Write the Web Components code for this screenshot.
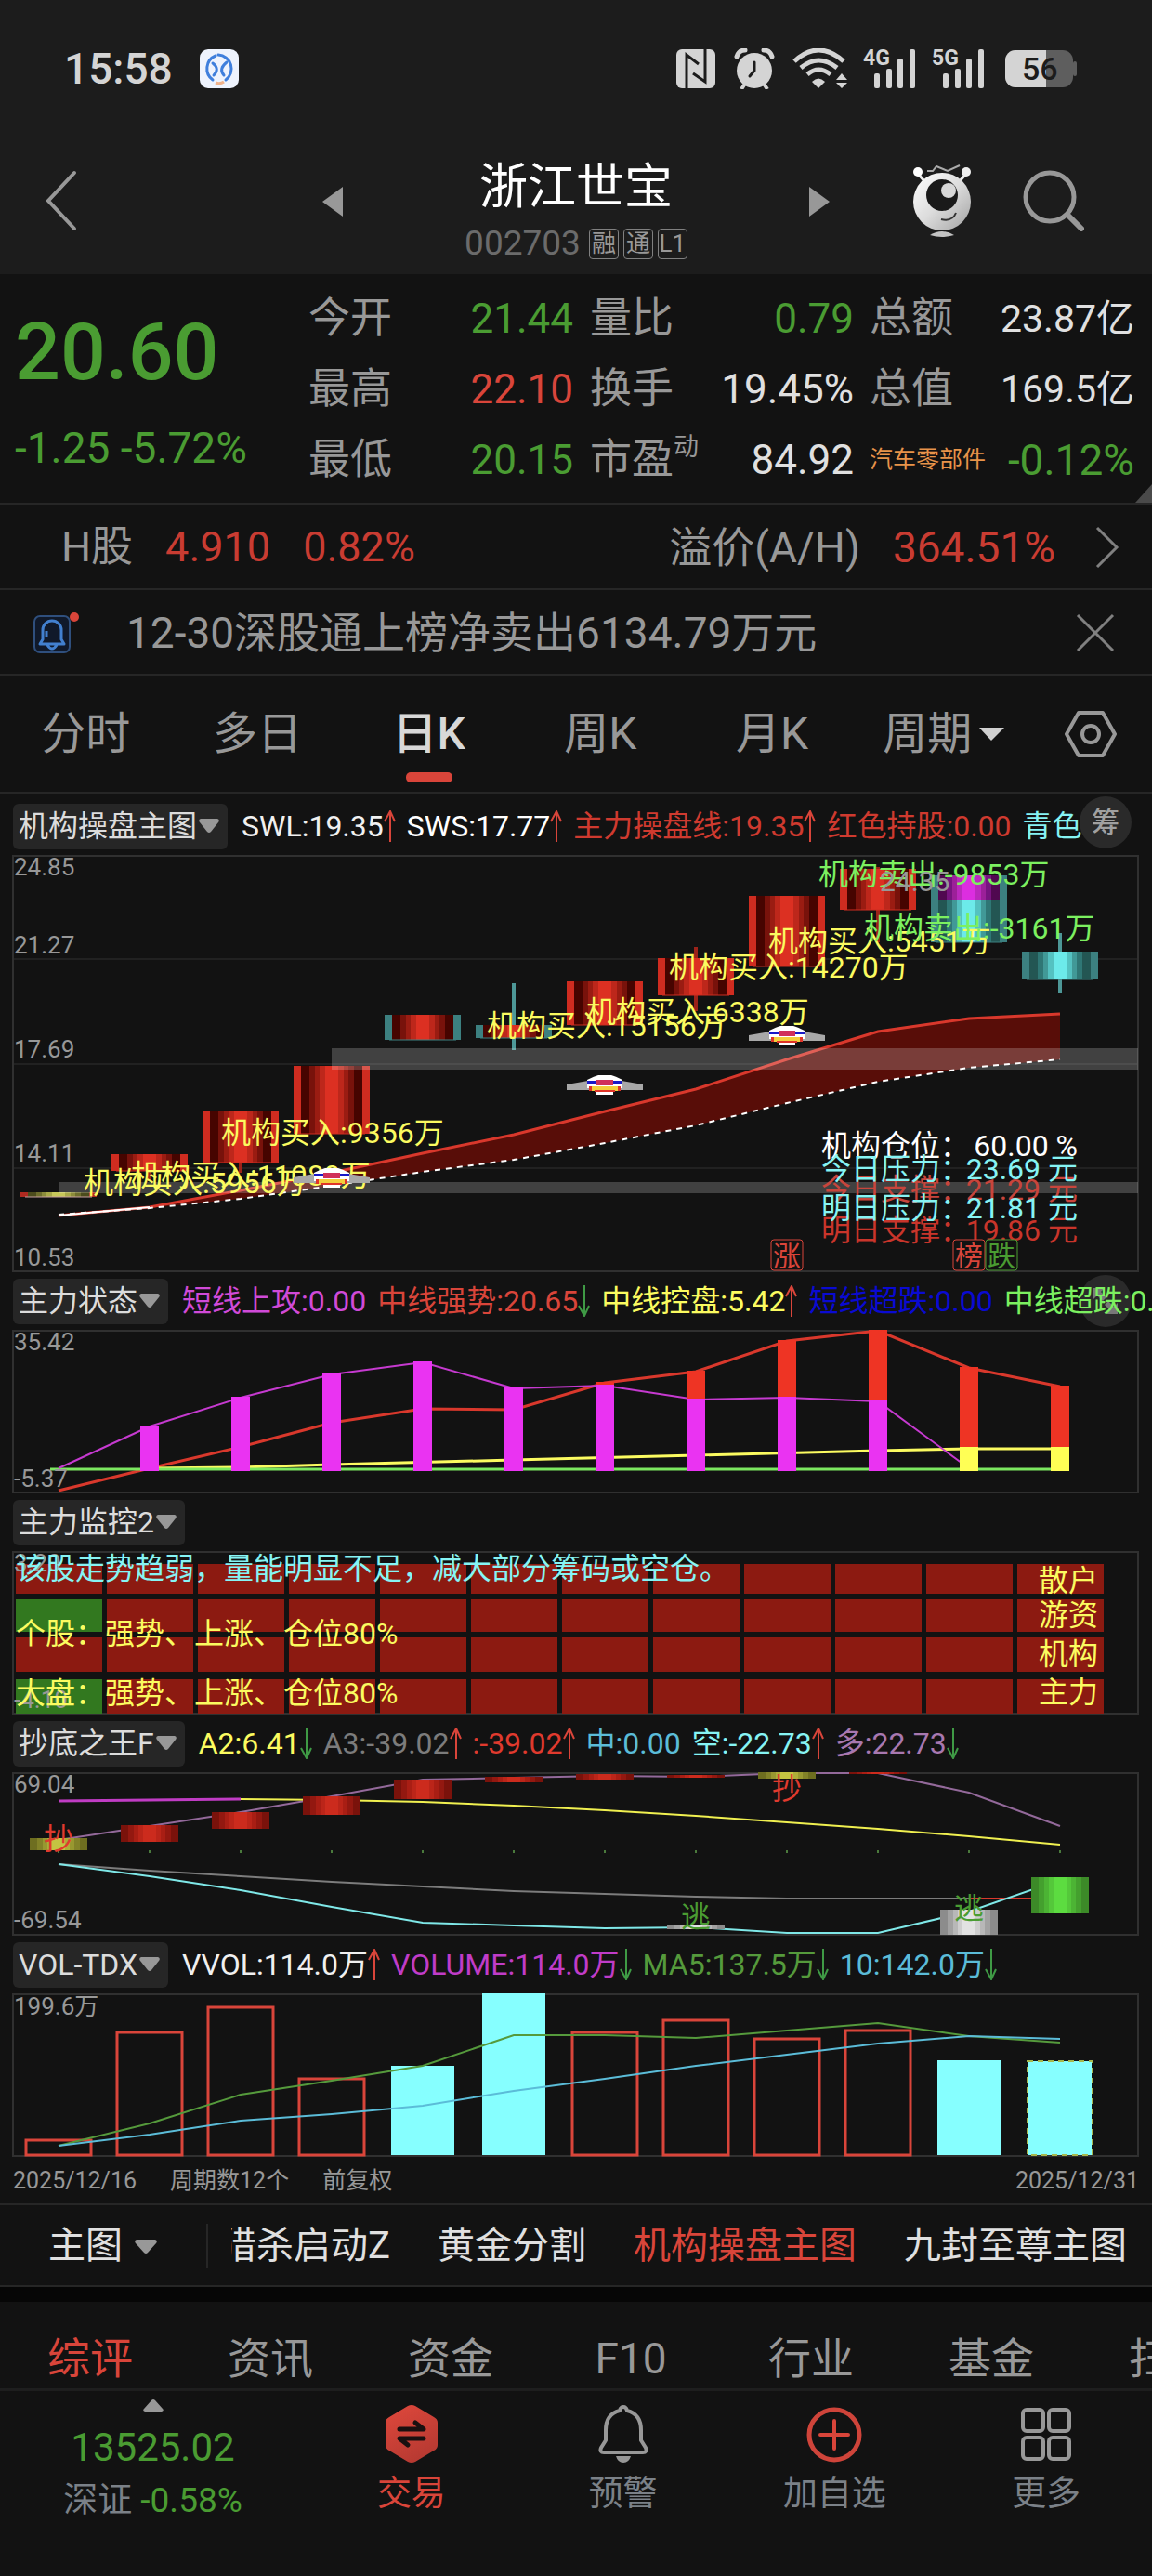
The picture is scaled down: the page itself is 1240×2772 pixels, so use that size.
<!DOCTYPE html>
<html lang="zh-CN">
<head>
<meta charset="utf-8">
<meta name="viewport" content="width=device-width, initial-scale=1">
<title>浙江世宝 002703</title>
<style>
  html { background: #121212; }
  body {
    margin: 0;
    background: #121212;
    color: #e0e0e0;
    font-family: Roboto, "Noto Sans CJK SC", sans-serif;
    --up: #d9453a;
    --down: #4a9c32;
    --muted: #989898;
    --line: #262626;
    --cyan: #86f4f4;
  }
</style>
</head>
<body>
<stock-page></stock-page>

<script>
const base = `
  * { box-sizing: border-box; }
  :host { display: block; }
  button, a { font: inherit; color: inherit; background: none; border: 0; padding: 0; margin: 0; text-decoration: none; white-space: nowrap; }
  svg { display: block; flex: none; }
`;

function define(name, css, html) {
  const template = document.createElement('template');
  template.innerHTML = `<style>${base}${css}</style>${html}`;
  customElements.define(name, class extends HTMLElement {
    constructor() {
      super();
      this.attachShadow({ mode: 'open' });
      this.shadowRoot.appendChild(template.content.cloneNode(true));
    }
  });
}

/* ---------- status bar ---------- */
const signal = (label) => `
  <svg width="58" height="44" viewBox="0 0 58 44" overflow="visible">
    <text x="0" y="18" font-size="23" font-weight="700" fill="#d4d4d4">${label}</text>
    <g fill="#d4d4d4"><rect x="12" y="27" width="6" height="16" rx="2"/><rect x="25" y="22" width="6" height="21" rx="2"/><rect x="37" y="11" width="6" height="32" rx="2"/><rect x="50" y="1" width="6" height="42" rx="2"/></g>
  </svg>`;

define('status-bar', `
  :host { display: flex; align-items: center; height: 148px; padding: 0 80px 0 69px; color: #d4d4d4; }
  .time { font-size: 46px; font-weight: 500; line-height: 50px; margin-right: 29px; }
  .icons { display: flex; align-items: center; gap: 16px; margin-left: auto; }
  .wide { margin-left: 5px; }
`, `
  <span class="time">15:58</span>
  <svg width="42" height="42" viewBox="0 0 42 42">
    <rect width="42" height="42" rx="9" fill="#eef3fd"/>
    <g fill="none" stroke="#3f7fdc" stroke-width="3" stroke-linecap="round">
      <path d="M14 33A15 15 0 0 1 17 7"/><path d="M20 6A15 15 0 0 1 28 33"/>
      <path d="M14 15q8 6 1 13M29 14q-9 7-3 14"/>
    </g>
    <path d="M17 36q5 2 9-1" stroke="#f0b28a" stroke-width="3" fill="none"/>
  </svg>
  <div class="icons">
    <svg width="44" height="44" viewBox="0 0 44 44">
      <rect x="1" y="1" width="42" height="42" rx="6" fill="#d4d4d4"/>
      <path d="M12 43V7l13 10M32 1v35L19 27" fill="none" stroke="#1c1c1c" stroke-width="3"/>
    </svg>
    <svg width="50" height="44" viewBox="-3 0 50 44">
      <circle cx="22" cy="24" r="19" fill="#d4d4d4"/>
      <path d="M3 9Q5 2 12 2M41 9Q39 2 32 2" stroke="#d4d4d4" stroke-width="5" fill="none" stroke-linecap="round"/>
      <path d="M12 38l-4 6M32 38l4 6" stroke="#d4d4d4" stroke-width="4"/>
      <path d="M22 15v9l-5 6" stroke="#1c1c1c" stroke-width="3" fill="none" stroke-linecap="round"/>
    </svg>
    <svg width="60" height="44" viewBox="0 0 60 44">
      <g fill="none" stroke="#d4d4d4" stroke-width="5"><path d="M2 14Q28-10 55 14"/><path d="M9 21Q28 5 48 21"/><path d="M16 28Q28 18 41 28"/></g>
      <path d="M21 36q7-7 14 0l-7 7z" fill="#d4d4d4"/>
      <path d="M47 34l6-7 6 7zM47 37h12l-6 6z" fill="#d4d4d4"/>
    </svg>
    ${signal('4G')}
    ${signal('5G')}
    <svg class="wide" width="78" height="40" viewBox="0 0 78 40">
      <rect width="73" height="40" rx="11" fill="#5e5e5e"/><rect x="73" y="12" width="4" height="16" rx="2" fill="#5e5e5e"/>
      <path d="M11 0h33v40H11A11 11 0 0 1 0 29V11A11 11 0 0 1 11 0z" fill="#d4d4d4"/>
      <text x="18" y="32" font-size="34" font-weight="500" fill="#1c1c1c">56</text>
    </svg>
  </div>
`);

/* ---------- title bar ---------- */
define('stock-header', `
  :host { display: grid; grid-template-columns: 330px 1fr 330px; align-items: center; height: 147px; padding-bottom: 5px; }
  .left, .right { display: flex; align-items: center; padding-bottom: 6px; }
  .left { padding-left: 48px; }
  .mid { display: flex; flex-direction: column; align-items: center; padding-top: 14px; }
  .right { padding-right: 72px; }
  .robot { margin-left: 73px; margin-right: 56px; }
  h1 { margin: 0; font-size: 52px; line-height: 64px; font-weight: 400; color: #fff; }
  .code { display: flex; align-items: center; gap: 5px; font-size: 37px; line-height: 40px; color: #6b6b6b; padding-top: 8px; }
  .code b { font-weight: 400; font-size: 26px; line-height: 31px; min-width: 32px; text-align: center; color: #989898; border: 1px solid #808080; border-radius: 4px; }
  .code span { margin-right: 4px; }
`, `
  <div class="left">
    <button aria-label="返回"><svg width="36" height="66" viewBox="0 0 36 66"><path d="M32 3L4 33l28 30" fill="none" stroke="#989898" stroke-width="4" stroke-linecap="round"/></svg></button>
  </div>
  <div class="mid">
    <h1>浙江世宝</h1>
    <div class="code"><span>002703</span><b>融</b><b>通</b><b>L1</b></div>
  </div>
  <div class="right">
    <button class="robot" aria-label="助手">
      <svg width="62" height="78" viewBox="0 0 62 78">
        <defs><linearGradient id="g" x1="0" y1="0" x2="1" y2="1"><stop offset="0" stop-color="#fff"/><stop offset=".5" stop-color="#dcdcdc"/><stop offset="1" stop-color="#a2a2a2"/></linearGradient></defs>
        <path d="M5 10l8 9M57 10l-8 9" stroke="#eee" stroke-width="3"/>
        <circle cx="5" cy="8" r="5" fill="#fff"/><circle cx="57" cy="8" r="5" fill="#eee"/>
        <path d="M15 7h6l4-5 12 5L50 1" stroke="#aaa" stroke-width="2" fill="none"/>
        <circle cx="31" cy="40" r="31" fill="url(#g)"/>
        <circle cx="31" cy="33" r="17" fill="#1a1a1a"/><circle cx="38" cy="28" r="8" fill="#d8d8d8"/>
        <path d="M30 59q12 3 16-7" stroke="#333" stroke-width="2" fill="none"/>
        <path d="M18 76q13-8 26 0q-13 4-26 0z" fill="#c4c4c4"/>
      </svg>
    </button>
    <button aria-label="搜索"><svg width="66" height="66" viewBox="0 0 66 66"><circle cx="29" cy="29" r="26" fill="none" stroke="#989898" stroke-width="5"/><path d="M48 48l15 15" stroke="#989898" stroke-width="6" stroke-linecap="round"/></svg></button>
  </div>
`);

/* previous / next stock arrows sit beside the name */
define('stock-switch', `
  :host { display: block; }
  svg path { fill: #989898; }
  :host([dir-next]) svg { transform: scaleX(-1); }
`, `<button aria-label="切换股票"><svg width="22" height="32" viewBox="0 0 22 32"><path d="M22 0v32L0 16z"/></svg></button>`);

/* ---------- quote ---------- */
define('quote-board', `
  :host { position: relative; display: grid; grid-template-columns: 316px 285px 18px 284px 17px 285px; border-bottom: 2px solid var(--line); height: 248px; padding: 10px 0 8px 16px; justify-content: start; }
  .price { display: flex; flex-direction: column; color: var(--down); }
  .price strong { font-size: 86px; font-weight: 500; line-height: 96px; padding-top: 26px; }
  .price span { font-size: 46px; line-height: 52px; padding-top: 29px; white-space: nowrap; }
  dl { display: grid; grid-template-rows: repeat(3, 76px); align-items: center; margin: 0; }
  dl.b { grid-column: 4; } dl.c { grid-column: 6; }
  div { display: flex; justify-content: space-between; align-items: center; }
  dt { font-size: 45px; line-height: 56px; color: var(--muted); white-space: nowrap; }
  dd { margin: 0; font-size: 44px; line-height: 56px; white-space: nowrap; color: #e0e0e0; }
  .c dd { font-size: 41px; }
  .c dd.down { font-size: 46px; }
  dd.up { color: var(--up); } dd.down { color: var(--down); }
  dt sup { font-size: 27px; line-height: 28px; vertical-align: 20px; }
  dt.tag { font-size: 25px; color: #e8944a; }
  i { position: absolute; right: 0; bottom: 0; width: 18px; height: 20px; background: #4a4a4a; clip-path: polygon(100% 0, 100% 100%, 0 100%); }
`, `
  <section class="price"><strong>20.60</strong><span>-1.25 -5.72%</span></section>
  <dl>
    <div><dt>今开</dt><dd class="down">21.44</dd></div>
    <div><dt>最高</dt><dd class="up">22.10</dd></div>
    <div><dt>最低</dt><dd class="down">20.15</dd></div>
  </dl>
  <dl class="b">
    <div><dt>量比</dt><dd class="down">0.79</dd></div>
    <div><dt>换手</dt><dd>19.45%</dd></div>
    <div><dt>市盈<sup>动</sup></dt><dd>84.92</dd></div>
  </dl>
  <dl class="c">
    <div><dt>总额</dt><dd>23.87亿</dd></div>
    <div><dt>总值</dt><dd>169.5亿</dd></div>
    <div><dt class="tag">汽车零部件</dt><dd class="down">-0.12%</dd></div>
  </dl>
  <i></i>
`);

define('ah-bar', `
  :host { display: flex; align-items: center; height: 92px; padding: 2px 34px 0 66px; border-bottom: 2px solid var(--line); font-size: 45px; line-height: 56px; color: var(--muted); white-space: nowrap; }
  .n { color: #c93c32; margin-left: 35px; }
  .right { display: flex; align-items: center; margin-left: auto; font-size: 46px; }
  button { margin-left: 42px; }
`, `
  <span>H股</span><span class="n">4.910</span><span class="n">0.82%</span>
  <div class="right"><span>溢价(A/H)</span><span class="n">364.51%</span>
  <button aria-label="更多"><svg width="28" height="46" viewBox="0 0 28 46"><path d="M3 2l21 21L3 44" fill="none" stroke="#808080" stroke-width="3"/></svg></button></div>
`);

define('notice-bar', `
  :host { display: flex; align-items: center; height: 92px; padding: 2px 40px 0 36px; border-bottom: 2px solid var(--line); font-size: 46px; line-height: 56px; color: var(--muted); }
  a { flex: 1; margin-left: 50px; }
`, `
  <svg width="50" height="46" viewBox="0 0 50 46">
    <rect x="1" y="5" width="38" height="39" rx="6" fill="#10192a" stroke="#2f4f7d" stroke-width="2"/>
    <path d="M7 35h26l-3-5V20a10 10 0 0 0-20 0v10zM15 36q5 8 10 0M14 21v6" fill="none" stroke="#4280cf" stroke-width="3" stroke-linejoin="round"/>
    <circle cx="44" cy="6" r="5" fill="#d9453a"/>
  </svg>
  <a href="#">12-30深股通上榜净卖出6134.79万元</a>
  <button aria-label="关闭"><svg width="42" height="42" viewBox="0 0 42 42"><path d="M2 2l38 38M40 2L2 40" stroke="#808080" stroke-width="3"/></svg></button>
`);

define('period-tabs', `
  :host { display: flex; height: 127px; border-bottom: 2px solid var(--line); }
  nav { flex: 1; display: grid; grid-template-columns: repeat(6, 1fr); }
  button { position: relative; font-size: 48px; line-height: 60px; color: var(--muted); }
  .on { color: #d8d8d8; font-weight: 500; }
  .on::after { content: ""; position: absolute; left: 50%; bottom: 10px; width: 50px; height: 11px; margin-left: -25px; border-radius: 5px; background: var(--up); }
  .drop { display: flex; align-items: center; justify-content: center; gap: 8px; }
  .set { width: 132px; display: flex; align-items: center; justify-content: center; }
`, `
  <nav>
    <button>分时</button><button>多日</button><button class="on">日K</button><button>周K</button><button>月K</button>
    <button class="drop">周期<svg width="27" height="14" viewBox="0 0 27 14"><path d="M0 0h27L13 14z" fill="#d0d0d0"/></svg></button>
  </nav>
  <button class="set" aria-label="设置"><svg width="56" height="50" viewBox="0 0 56 50"><path d="M15 2h26l13 23-13 23H15L2 25z" fill="none" stroke="#989898" stroke-width="4" stroke-linejoin="round"/><circle cx="28" cy="25" r="9" fill="none" stroke="#989898" stroke-width="4"/></svg></button>
`);

/* ---------- chart panels ---------- */
define('chart-panel', `
  header { position: relative; display: flex; align-items: center; height: 62px; padding: 0 0 0 14px; overflow: hidden; }
  :host([first]) header { height: 66px; padding-top: 4px; }
  .pick { display: flex; align-items: center; gap: 2px; height: 49px; padding: 0 9px 0 6px; border-radius: 6px; background: #262626; font-size: 32px; line-height: 40px; color: #dcdcdc; }
  .values { position: relative; z-index: 1; display: flex; align-items: center; gap: 12px; margin-left: 15px; }
`, `
  <header>
    <button class="pick"><slot name="name"></slot><svg width="22" height="16" viewBox="0 0 22 16"><path d="M2 0h18q3 1 1 4L13 14q-2 2-4 0L1 4Q-1 1 2 0z" fill="#989898"/></svg></button>
    <div class="values"><slot name="value"></slot></div>
    <slot name="tool"></slot>
  </header>
  <slot></slot>
`);

define('ind-value', `
  :host { display: flex; align-items: center; font-size: 32px; line-height: 40px; white-space: nowrap; }
  svg { display: none; fill: none; stroke-width: 2; }
  :host([up]) .u, :host([down]) .d { display: block; }
  .u { stroke: #d9453a; } .d { stroke: #3f9a45; }
`, `
  <slot></slot>
  <svg class="u" width="13" height="34" viewBox="0 0 13 34"><path d="M7 34V1M1 12L7 1l5 11"/></svg>
  <svg class="d" width="13" height="34" viewBox="0 0 13 34"><path d="M7 0v33M1 22l6 11 5-11"/></svg>
`);

define('round-tool', `
  :host { position: absolute; right: 22px; top: 3px; }
  button { width: 56px; height: 56px; border-radius: 50%; background: #2a2a2a; font-size: 30px; line-height: 56px; color: #a0a0a0; font-weight: 500; display: flex; align-items: center; justify-content: center; }
`, `<button aria-label="工具"><slot></slot></button>`);

const X = (i) => 63 + 98 * i;
const poly = (pts, color, width = 2, extra = '') =>
  `<polyline points="${pts.map((y, i) => `${X(i)},${y}`).join(' ')}" fill="none" stroke="${color}" stroke-width="${width}" ${extra}/>`;
const label = (x, y, text, fill = '#989898', size = 26) =>
  `<text x="${x}" y="${y}" font-size="${size}" fill="${fill}">${text}</text>`;
const frame = (top, h) =>
  `<rect x="14" y="${top + 1}" width="1211" height="${h - 2}" fill="none" stroke="#303030" stroke-width="2"/>`;

// banded fill, dark at the sides and bright in the middle
function bands(id, colors) {
  const edges = [0, .13, .22, .31, .39];
  let stops = '';
  colors.forEach((c, i) => { stops += `<stop offset="${edges[i]}" stop-color="${c}"/><stop offset="${edges[i + 1] || .61}" stop-color="${c}"/>`; });
  for (let i = colors.length - 2; i >= 0; i--) {
    stops += `<stop offset="${1 - edges[i + 1]}" stop-color="${colors[i]}"/><stop offset="${1 - edges[i]}" stop-color="${colors[i]}"/>`;
  }
  return `<linearGradient id="${id}">${stops}</linearGradient>`;
}
const defs = `<defs>
  ${bands('red', ['#460400', '#78120b', '#9a1c12', '#bd271b', '#dc3022'])}
  ${bands('cyan', ['#235653', '#2f7775', '#419997', '#54c2c1', '#6ceaea'])}
  ${bands('mag', ['#500850', '#771480', '#9c2099', '#bb29bd', '#dc2ee0'])}
  ${bands('yel', ['#4c4c1c', '#6e6e2c', '#8c8c3a', '#a9a948', '#c8c85a'])}
  ${bands('red2', ['#7a120b', '#931810', '#a91e14', '#bb2519', '#cc2b1d'])}
  ${bands('yel2', ['#6e6e20', '#828228', '#989830', '#adad38', '#c4c442'])}
  ${bands('wht', ['#8c8c8c', '#a2a2a2', '#b8b8b8', '#cecece', '#e2e2e2'])}
  ${bands('grn', ['#3c8a28', '#44a02e', '#4cb434', '#54c83a', '#5cdc40'])}
</defs>`;

function chart(name, top, height, body) {
  define(name, `svg { width: 100%; height: auto; }`,
    `<svg viewBox="0 ${top} 1240 ${height}" role="img">${defs}${frame(top, height)}${body}</svg>`);
}

/* main candles: [index, top, bottom, core, edge, wickTop, wickBottom] */
const candles = [
  [0, 1283, 1288, 'yel', '#b02a20'],
  [1, 1242, 1260, 'red', '#cf2c20', 1242, 1271],
  [2, 1196, 1251, 'red', '#cf2c20', 1196, 1262],
  [3, 1147, 1220, 'red', '#cf2c20'],
  [4, 1092, 1119, 'red', '#3c8080'],
  [5, 1103, 1117, 'red', '#3c8080', 1058, 1130],
  [6, 1056, 1103, 'red', '#cf2c20'],
  [7, 1031, 1071, 'red', '#cf2c20', 1019, 1088],
  [8, 964, 1040, 'red', '#cf2c20'],
  [9, 935, 979, 'red', '#cf2c20', 933, 1014],
  [10, 942, 1014, 'cyan', '#3c8080'],
  [11, 1024, 1054, 'cyan', '#3c8080', 1004, 1069],
].map(([i, t, b, core, edge, wt, wb]) => {
  const x = X(i);
  const wick = wt ? `<path d="M${x} ${wt}V${wb}" stroke="${edge === '#cf2c20' ? '#9c2219' : '#4d9797'}" stroke-width="4"/>` : '';
  return `${wick}<rect x="${x - 41}" y="${t}" width="82" height="${b - t}" fill="${edge}"/><rect x="${x - 33}" y="${t}" width="66" height="${b - t}" fill="url(#${core})"/><path d="M${x - 36} ${b}h72" stroke="${core === 'yel' ? '#c8a0a0' : edge}" stroke-width="1"/>`;
}).join('');

const fast = [1308, 1299, 1281, 1262, 1241, 1221, 1196, 1172, 1140, 1110, 1096, 1091];
const slow = [1307, 1300, 1290, 1276, 1261, 1248, 1230, 1211, 1187, 1164, 1149, 1140];
const area = fast.slice(1).map((y, i) => `${X(i + 1)},${y}`).concat(slow.slice(1).map((y, i) => `${X(i + 1)},${y}`).reverse()).join(' ');
const emblem = (x, y) => `<g transform="translate(${x} ${y})">
  <path d="M-41 10L-18 6h36l23 4v6h-82z" fill="#a8a8a8"/>
  <path d="M-19 5q8-4 12-5h14q4 1 12 5v9H-19z" fill="#fff"/><path d="M-19 6h38v3h-38z" fill="#1818c8"/>
  <path d="M-9 5H9v6H-9z" fill="#d0305a"/><path d="M-17 12h34l-3 5h-28z" fill="#f3cf3c"/><path d="M-17 12h3v5h-3zM14 12h3v5h-3zM-11 16h22v2h-22z" fill="#e03428"/><path d="M-9 18H9v3H-9z" fill="#fff"/></g>`;
const info = (y, name, value, fill) => label(884, y, name, fill, 32) + `<text x="1160" y="${y}" font-size="32" fill="${fill}" text-anchor="end">${value}</text>`;
const stamp = (x, t, color) => `<rect x="${x + 1}" y="1334" width="34" height="33" rx="3" fill="#121212" stroke="${color}" stroke-width="1"/>` + label(x + 3, 1362, t, color, 30);
const buy = '#fbfb60', sell = '#7cf060';

chart('main-chart', 920, 449, `
  <path d="M14 1032H1225M14 1145H1225M14 1257H1225" stroke="#303030"/>
  <polygon points="${area}" fill="#580d08"/>
  ${poly(fast, '#d9382c', 3)}
  <path d="M63 1308L161 1299" stroke="#fff" stroke-width="2"/>
  ${poly(slow, '#fff', 2, 'stroke-dasharray="6 6"')}
  ${candles}
  <rect x="1010" y="942" width="66" height="27" fill="url(#mag)"/>
  <rect x="357" y="1128" width="868" height="23" fill="#fff" opacity=".2"/>
  <rect x="63" y="1272" width="1162" height="12" fill="#fff" opacity=".2"/>
  ${label(15, 942, '24.85')}${label(15, 1026, '21.27')}${label(15, 1138, '17.69')}${label(15, 1250, '14.11')}${label(15, 1362, '10.53')}
  ${label(90, 1284, '机构买入:5956万', buy, 32)}
  ${label(141, 1276, '机构买入:11089万', buy, 32)}
  ${emblem(357, 1257)}${emblem(651, 1157)}${emblem(847, 1104)}
  ${label(238, 1230, '机构买入:9356万', buy, 32)}
  ${label(524, 1115, '机构买入:15156万', buy, 32)}
  ${label(631, 1100, '机构买入:6338万', buy, 32)}
  ${label(720, 1052, '机构买入:14270万', buy, 32)}
  ${label(827, 1024, '机构买入:5451万', buy, 32)}
  ${label(881, 952, '机构卖出:-9853万', sell, 32)}
  ${label(930, 1010, '机构卖出:-3161万', sell, 32)}
  ${label(947, 959, '24.35', '#989898', 30)}
  ${info(1244, '机构仓位：', '60.00 %', '#fff')}
  ${info(1291, '今日支撑：', '21.29 元', '#c8453c')}
  ${info(1269, '今日压力：', '23.69 元', '#86f4f4')}
  ${info(1335, '明日支撑：', '19.86 元', '#c9352b')}
  ${info(1311, '明日压力：', '21.81 元', '#86f4f4')}
  ${stamp(829, '涨', '#d9453a')}${stamp(1025, '榜', '#d9453a')}${stamp(1060, '跌', '#4a9c32')}
`);

const bar = (i, top, bottom, fill) => `<rect x="${X(i) - 10}" y="${top}" width="20" height="${bottom - top}" fill="${fill}"/>`;
const attack = [1580, 1535, 1504, 1479, 1466, 1494, 1491, 1506, 1504, 1508, 1580];
const strong = [1604, 1580, 1557, 1531, 1516, 1517, 1488, 1476, 1443, 1432, 1472, 1492];
chart('state-chart', 1431, 176, `
  ${label(15, 1453, '35.42')}
  ${poly(strong, '#d9382c', 3)}
  <polyline points="161,1580 259,1579 357,1576 553,1571 749,1566 945,1561 1043,1559 1151,1559" fill="none" stroke="#fbfb60" stroke-width="3"/>
  <path d="M54 1581H1151" stroke="#7ce860" stroke-width="3"/>
  ${poly(attack, '#c63ad0', 2)}
  ${[6, 7, 8, 9, 10, 11].map((i) => bar(i, strong[i] - 1, 1583, '#ee3424')).join('')}
  ${[1, 2, 3, 4, 5, 6, 7, 8, 9].map((i) => bar(i, attack[i] - 1, 1583, '#ea33f2')).join('')}
  ${bar(10, 1557, 1583, '#ffff55')}${bar(11, 1557, 1583, '#ffff55')}
  ${label(15, 1600, '-5.37')}
`);

let cells = '';
[[1683, 32], [1721, 35], [1762, 37], [1807, 37]].forEach(([y, h], r) => {
  for (let i = 0; i < 12; i++) {
    cells += `<rect x="${X(i) - 46}" y="${y}" width="93" height="${h}" fill="${i === 0 && r % 2 ? '#32781f' : '#8c1a11'}"/>`;
  }
});
chart('monitor-chart', 1669, 176, `
  ${cells}
  ${label(15, 1691, '3.20')}${label(15, 1838, '-4.10')}
  ${label(17, 1699, '该股走势趋弱，量能明显不足，减大部分筹码或空仓。', '#86f4f4', 32)}
  ${label(17, 1769, '个股：强势、上涨、仓位80%', '#fbfb60', 32)}
  ${label(17, 1833, '大盘：强势、上涨、仓位80%', '#fbfb60', 32)}
  ${label(1118, 1712, '散户', '#fbfb60', 32)}${label(1118, 1749, '游资', '#fbfb60', 32)}${label(1118, 1791, '机构', '#fbfb60', 32)}${label(1118, 1832, '主力', '#fbfb60', 32)}
`);

const block = (i, t, b, fill) => `<rect x="${X(i) - 31}" y="${t}" width="62" height="${b - t}" fill="url(#${fill})"/>`;
chart('bottom-chart', 1907, 176, `
  ${poly([1980, 1965, 1950, 1933, 1915, 1913, 1911, 1912, 1908, 1908, 1929, 1965], '#93699a', 2)}
  <polyline points="259,1936 357,1937 455,1939 553,1943 651,1948 749,1954 847,1961 945,1968 1043,1976 1141,1985" fill="none" stroke="#f0f050" stroke-width="2"/>
  <path d="M63 1938L161 1937 259 1936" fill="none" stroke="#c03cc4" stroke-width="3"/>
  ${Array.from({ length: 12 }, (_, i) => `<rect x="${X(i) - 1}" y="1991" width="2" height="3" fill="#4a7a3c"/>`).join('')}
  ${poly([2006, 2013, 2019, 2025, 2030, 2035, 2038, 2041, 2043, 2043, 2043], '#7c7c7c', 2)}
  <path d="M1043 2043H1112" stroke="#d9382c" stroke-width="2"/>
  <polyline points="63,2006 161,2019 259,2034 357,2052 455,2069 553,2072 651,2075 749,2074 847,2080 945,2080 1043,2057 1141,2023" fill="none" stroke="#7fe8e8" stroke-width="2"/>
  ${block(0, 1978, 1991, 'yel2')}${block(1, 1964, 1982, 'red2')}${block(2, 1950, 1968, 'red2')}${block(3, 1933, 1953, 'red2')}${block(4, 1915, 1936, 'red2')}
  ${block(5, 1912, 1918, 'red2')}${block(6, 1909, 1915, 'red2')}${block(7, 1910, 1913, 'red2')}${block(8, 1907, 1914, 'yel2')}${block(9, 1907, 1909, 'red2')}
  ${block(7, 2072, 2076, 'wht')}${block(10, 2055, 2082, 'wht')}${block(11, 2020, 2059, 'grn')}
  ${label(47, 1990, '抄', '#e03a2e', 32)}${label(831, 1936, '抄', '#e03a2e', 32)}
  ${label(733, 2074, '逃', '#4a9c32', 32)}${label(1027, 2065, '逃', '#4a9c32', 32)}
  ${label(15, 1929, '69.04')}${label(15, 2075, '-69.54')}
`);

const hollow = (i, top) => `<rect x="${X(i) - 35}" y="${top}" width="70" height="${2319 - top}" fill="none" stroke="#d9453a" stroke-width="3"/>`;
const solid = (i, top) => `<rect x="${X(i) - 34}" y="${top}" width="68" height="${2319 - top}" fill="#86ffff"/>`;
chart('volume-chart', 2145, 176, `
  ${hollow(0, 2303)}${hollow(1, 2187)}${hollow(2, 2160)}${hollow(3, 2237)}${solid(4, 2223)}${solid(5, 2145)}
  ${hollow(6, 2187)}${hollow(7, 2174)}${hollow(8, 2194)}${hollow(9, 2185)}${solid(10, 2217)}${solid(11, 2218)}
  <rect x="1106" y="2218" width="70" height="101" fill="none" stroke="#a8b84c" stroke-width="2" stroke-dasharray="6 5"/>
  ${poly([2309, 2285, 2254, 2239, 2223, 2190, 2190, 2193, 2185, 2177, 2191, 2198], '#559a3c', 2)}
  ${poly([2309, 2297, 2282, 2275, 2266, 2250, 2237, 2223, 2211, 2199, 2191, 2194], '#5bbcd8', 2)}
  ${label(15, 2168, '199.6万')}
`);

define('chart-footer', `
  :host { display: flex; gap: 36px; align-items: center; height: 52px; padding: 2px 14px 0; font-size: 25px; line-height: 32px; color: var(--muted); border-bottom: 2px solid var(--line); }
  :last-child { margin-left: auto; }
`, `<span>2025/12/16</span><span>周期数12个</span><span>前复权</span><span>2025/12/31</span>`);

define('formula-tabs', `
  :host { display: flex; align-items: center; height: 88px; padding-top: 2px; border-bottom: 2px solid var(--line); font-size: 40px; line-height: 48px; }
  .all { display: flex; align-items: center; gap: 13px; width: 224px; height: 48px; padding-left: 52px; border-right: 2px solid var(--line); }
  nav { flex: 1; display: flex; justify-content: flex-end; gap: 51px; overflow: hidden; margin-left: 25px; padding-right: 27px; }
  .on { color: var(--up); }
`, `
  <button class="all">主图<svg width="24" height="15" viewBox="0 0 24 15"><path d="M2 0h20q3 1 1 4L14 14q-2 2-4 0L1 4Q-1 1 2 0z" fill="#989898"/></svg></button>
  <nav><button>猎杀启动Z</button><button>黄金分割</button><button class="on">机构操盘主图</button><button>九封至尊主图</button></nav>
`);

define('info-tabs', `
  :host { border-top: 16px solid #060606; border-bottom: 3px solid #1e1e1e; overflow: hidden; }
  nav { display: grid; grid-template-columns: repeat(7, 194px); height: 93px; padding-top: 28px; font-size: 46px; line-height: 64px; color: var(--muted); }
  .on { color: var(--up); }
`, `<nav><button class="on">综评</button><button>资讯</button><button>资金</button><button>F10</button><button>行业</button><button>基金</button><button>扫雷</button></nav>`);

define('bottom-nav', `
  :host { display: grid; grid-template-columns: 329px repeat(4, 1fr); min-height: 199px; font-size: 37px; line-height: 46px; color: #7b8188; }
  button { display: flex; flex-direction: column; align-items: center; justify-content: flex-start; padding-top: 14px; }
  button svg { margin-bottom: 10px; }
  .hot { color: var(--up); }
  button.index { padding-top: 9px; color: var(--down); }
  .index svg { margin: 0 0 13px; }
  .index b { font-weight: 400; font-size: 42px; line-height: 52px; }
  .index i { font-style: normal; color: #7b8188; }
  .index span { margin-top: 8px; }
`, `
  <button class="index">
    <svg width="22" height="13" viewBox="0 0 22 13"><path d="M2 13h18q3-1 1-3L13 1q-2-2-4 0L1 10q-2 2 1 3z" fill="#989898"/></svg>
    <b>13525.02</b><span><i>深证</i> -0.58%</span>
  </button>
  <button class="hot">
    <svg width="56" height="64" viewBox="0 0 56 64"><defs><linearGradient id="h" x2=".5" y2="1"><stop offset="0" stop-color="#e0483c"/><stop offset="1" stop-color="#b83a32"/></linearGradient></defs>
      <path d="M24 2q4-2 8 0l20 12q4 2 4 6v24q0 4-4 6L32 62q-4 2-8 0L4 50q-4-2-4-6V20q0-4 4-6z" fill="url(#h)"/>
      <path d="M15 27h26l-9-7M41 37H15l9 7" fill="none" stroke="#1a1010" stroke-width="5" stroke-linecap="round" stroke-linejoin="round"/></svg>
    交易
  </button>
  <button>
    <svg width="54" height="64" viewBox="0 0 54 64"><path d="M27 3q-3 0-4 4Q8 11 8 28v11l-5 8q-2 5 3 5h42q5 0 3-5l-5-8V28Q46 11 31 7q-1-4-4-4z" fill="none" stroke="#989898" stroke-width="4" stroke-linejoin="round"/><path d="M19 56h16q-2 7-8 7t-8-7z" fill="#989898"/></svg>
    预警
  </button>
  <button>
    <svg width="60" height="64" viewBox="0 0 60 64"><circle cx="30" cy="33" r="27" fill="none" stroke="#cf443a" stroke-width="5"/><path d="M30 18v30M15 33h30" stroke="#d9453a" stroke-width="4" stroke-linecap="round"/></svg>
    加自选
  </button>
  <button>
    <svg width="56" height="64" viewBox="0 0 56 64"><g fill="none" stroke="#989898" stroke-width="4"><rect x="3" y="6" width="22" height="23" rx="4"/><rect x="31" y="6" width="22" height="23" rx="4"/><rect x="3" y="36" width="22" height="23" rx="4"/><rect x="31" y="36" width="22" height="23" rx="4"/></g></svg>
    更多
  </button>
`);

define('stock-page', `
  .top { position: relative; background: #1c1c1c; }
  .prev, .next { position: absolute; top: 201px; left: calc(50% - 273px); }
  .next { left: calc(50% + 251px); }
`, `
  <div class="top">
    <status-bar></status-bar>
    <stock-header></stock-header>
    <stock-switch class="prev"></stock-switch>
    <stock-switch class="next" dir-next></stock-switch>
  </div>
  <quote-board></quote-board>
  <ah-bar></ah-bar>
  <notice-bar></notice-bar>
  <period-tabs></period-tabs>
  <chart-panel first>
    <span slot="name">机构操盘主图</span>
    <ind-value slot="value" up style="color:#f0f0f0">SWL:19.35</ind-value>
    <ind-value slot="value" up style="color:#fff">SWS:17.77</ind-value>
    <ind-value slot="value" up style="color:#cf3a2f">主力操盘线:19.35</ind-value>
    <ind-value slot="value" style="color:#cf3a2f">红色持股:0.00</ind-value>
    <ind-value slot="value" style="color:#86f4f4">青色</ind-value>
    <round-tool slot="tool">筹</round-tool>
    <main-chart></main-chart>
  </chart-panel>
  <chart-panel>
    <span slot="name">主力状态</span>
    <ind-value slot="value" style="color:#d04ad8">短线上攻:0.00</ind-value>
    <ind-value slot="value" down style="color:#d9453a">中线强势:20.65</ind-value>
    <ind-value slot="value" up style="color:#fbfb60">中线控盘:5.42</ind-value>
    <ind-value slot="value" style="color:#0a0ad2">短线超跌:0.00</ind-value>
    <ind-value slot="value" style="color:#7cf060">中线超跌:0.00</ind-value>
    <round-tool slot="tool"><svg width="34" height="34" viewBox="0 0 34 34"><path d="M4 3h12l-4 4 6 6-4 4-6-6-4 4zM30 31H18l4-4-6-6 4-4 6 6 4-4z" fill="#787878"/></svg></round-tool>
    <state-chart></state-chart>
  </chart-panel>
  <chart-panel>
    <span slot="name">主力监控2</span>
    <monitor-chart></monitor-chart>
  </chart-panel>
  <chart-panel>
    <span slot="name">抄底之王F</span>
    <ind-value slot="value" down style="color:#fbfb60">A2:6.41</ind-value>
    <ind-value slot="value" up style="color:#7c7c7c">A3:-39.02</ind-value>
    <ind-value slot="value" up style="color:#e03a2e">:-39.02</ind-value>
    <ind-value slot="value" style="color:#5bbcd8">中:0.00</ind-value>
    <ind-value slot="value" up style="color:#86f4f4">空:-22.73</ind-value>
    <ind-value slot="value" down style="color:#a878b0">多:22.73</ind-value>
    <bottom-chart></bottom-chart>
  </chart-panel>
  <chart-panel>
    <span slot="name">VOL-TDX</span>
    <ind-value slot="value" up style="color:#f0f0f0">VVOL:114.0万</ind-value>
    <ind-value slot="value" down style="color:#c03cc8">VOLUME:114.0万</ind-value>
    <ind-value slot="value" down style="color:#559a3c">MA5:137.5万</ind-value>
    <ind-value slot="value" down style="color:#5bbcd8">10:142.0万</ind-value>
    <volume-chart></volume-chart>
  </chart-panel>
  <chart-footer></chart-footer>
  <formula-tabs></formula-tabs>
  <info-tabs></info-tabs>
  <bottom-nav></bottom-nav>
`);
</script>
</body>
</html>
